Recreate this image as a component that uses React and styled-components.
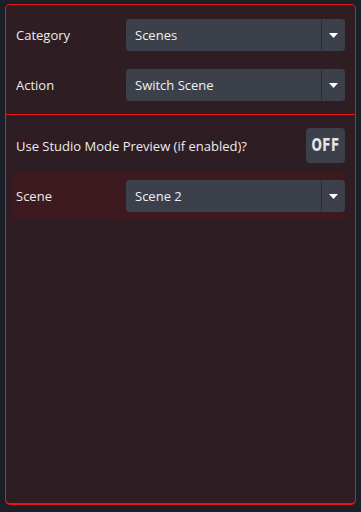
import React from "react";
import styled, { createGlobalStyle } from "styled-components";

const GlobalStyle = createGlobalStyle`
  html, body {
    margin: 0;
    padding: 0;
    background: #1b1f27;
  }
  body {
    font-family: "Open Sans", "Noto Sans", sans-serif;
    font-size: 13px;
    color: #e9e9ea;
  }
`;

const fields = [
  { label: "Category", value: "Scenes" },
  { label: "Action", value: "Switch Scene" },
];

export default function App() {
  return (
    <>
      <GlobalStyle />
      <Page>
        <Panel>
          <TopSection>
            {fields.map((f) => (
              <Row key={f.label}>
                <Label>{f.label}</Label>
                <Select value={f.value} />
              </Row>
            ))}
          </TopSection>
          <Options>
            <ToggleRow>
              <Label>Use Studio Mode Preview (if enabled)?</Label>
              <Toggle>
                <ToggleText>OFF</ToggleText>
              </Toggle>
            </ToggleRow>
            <Row $active>
              <Label>Scene</Label>
              <Select value="Scene 2" />
            </Row>
          </Options>
        </Panel>
      </Page>
    </>
  );
}

function Select({ value }) {
  return (
    <SelectBox>
      <SelectValue>{value}</SelectValue>
      <SelectArrow>
        <svg width="9" height="5" viewBox="0 0 9 5">
          <path d="M0 0 L9 0 L4.5 5 Z" fill="#ffffff" />
        </svg>
      </SelectArrow>
    </SelectBox>
  );
}

const Page = styled.div`
  padding: 4px 5px 7px 5px;
  height: 512px;
  box-sizing: border-box;
`;

const Panel = styled.div`
  width: 351px;
  height: 501px;
  box-sizing: border-box;
  background: #2e1d22;
  border: 1px solid #e8161a;
  border-bottom-width: 2px;
  border-radius: 5px;
  display: flex;
  flex-direction: column;
`;

const TopSection = styled.div`
  padding: 5px 10px 4px 10px;
  border-bottom: 1px solid #e8161a;
  display: flex;
  flex-direction: column;
`;

const Options = styled.div`
  padding: 13px 10px 0 6px;
  display: flex;
  flex-direction: column;
  gap: 9px;
`;

const Row = styled.div`
  display: grid;
  grid-template-columns: 110px 1fr;
  align-items: center;
  height: ${(p) => (p.$active ? "48px" : "50px")};
  padding-left: ${(p) => (p.$active ? "4px" : "0")};
  background: ${(p) => (p.$active ? "#3d1a20" : "transparent")};
  border-radius: 3px;
`;

const ToggleRow = styled.div`
  display: flex;
  align-items: center;
  justify-content: space-between;
  padding-left: 4px;
  height: 35px;
`;

const Label = styled.span`
  color: #ececed;
  font-size: 13px;
  white-space: nowrap;
`;

const SelectBox = styled.div`
  display: flex;
  align-items: stretch;
  height: 32px;
  background: #3c404b;
  border-radius: 4px;
  overflow: hidden;
`;

const SelectValue = styled.div`
  flex: 1;
  display: flex;
  align-items: center;
  padding-left: 9px;
  color: #f0f0f2;
  font-size: 13px;
`;

const SelectArrow = styled.div`
  width: 23px;
  display: flex;
  align-items: center;
  justify-content: center;
  border-left: 1px solid #272a32;
  margin: 1px 0;
`;

const Toggle = styled.div`
  width: 39px;
  height: 35px;
  background: #3c404b;
  border-radius: 4px;
  display: flex;
  align-items: center;
  justify-content: center;
`;

const ToggleText = styled.span`
  display: inline-block;
  font-family: "DejaVu Sans", sans-serif;
  font-weight: bold;
  font-size: 17px;
  line-height: 1;
  color: #e4e4e6;
  letter-spacing: 0.5px;
  transform: scaleX(0.72);
`;
